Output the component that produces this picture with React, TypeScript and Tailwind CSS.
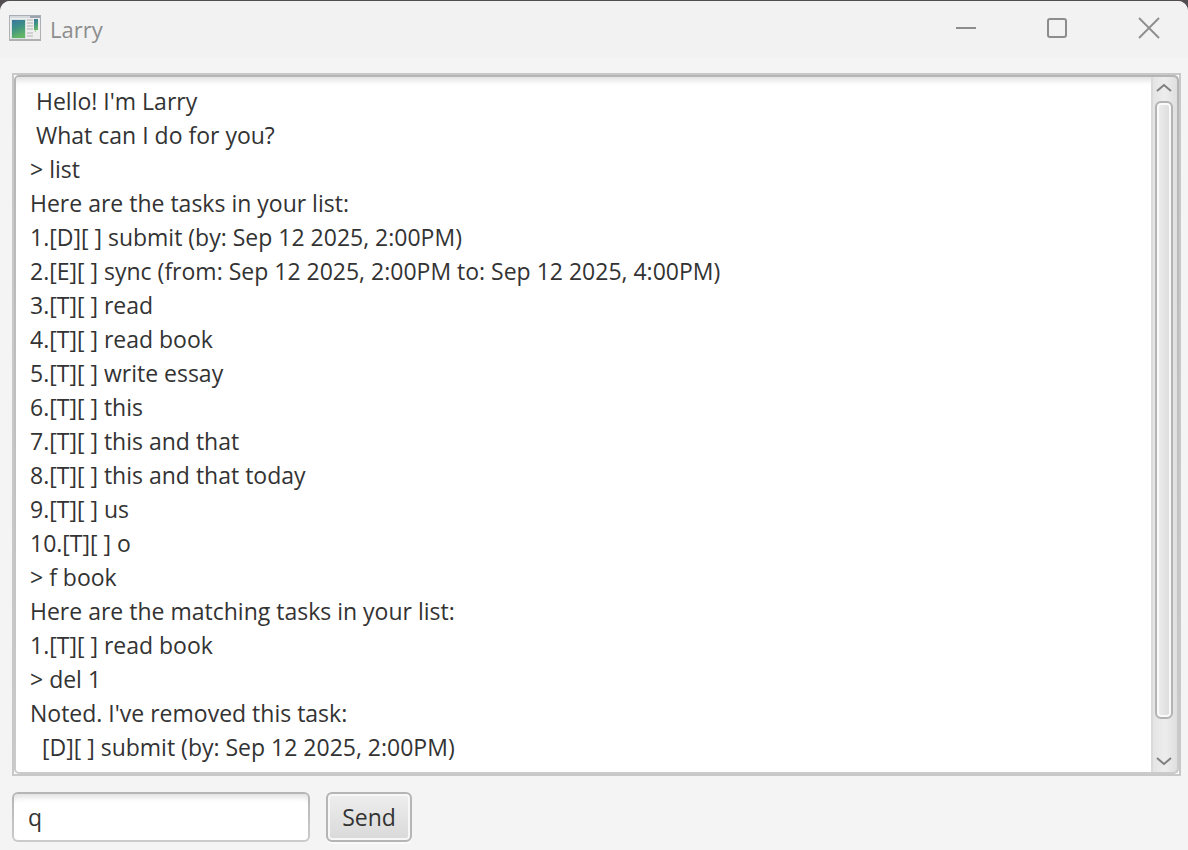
import { useState } from "react";

const lines: string[] = [
  " Hello! I'm Larry",
  " What can I do for you?",
  "> list",
  "Here are the tasks in your list:",
  "1.[D][ ] submit (by: Sep 12 2025, 2:00PM)",
  "2.[E][ ] sync (from: Sep 12 2025, 2:00PM to: Sep 12 2025, 4:00PM)",
  "3.[T][ ] read",
  "4.[T][ ] read book",
  "5.[T][ ] write essay",
  "6.[T][ ] this",
  "7.[T][ ] this and that",
  "8.[T][ ] this and that today",
  "9.[T][ ] us",
  "10.[T][ ] o",
  "> f book",
  "Here are the matching tasks in your list:",
  "1.[T][ ] read book",
  "> del 1",
  "Noted. I've removed this task:",
  "  [D][ ] submit (by: Sep 12 2025, 2:00PM)",
];

function AppIcon() {
  return (
    <svg width="32" height="26" viewBox="0 0 32 26" aria-hidden="true">
      <defs>
        <linearGradient id="pane" x1="0" y1="0" x2="0.3" y2="1">
          <stop offset="0" stopColor="#3a75a0" />
          <stop offset="0.5" stopColor="#3f9185" />
          <stop offset="1" stopColor="#62b565" />
        </linearGradient>
        <linearGradient id="frame" x1="0" y1="0" x2="0" y2="1">
          <stop offset="0" stopColor="#a9afb5" />
          <stop offset="1" stopColor="#b0b0b0" />
        </linearGradient>
      </defs>
      <rect width="32" height="26" fill="url(#frame)" />
      <rect x="1" y="2" width="30" height="22" fill="#eeeeee" />
      <rect x="1" y="1" width="20" height="2" fill="#d5d9dd" />
      <rect x="21" y="1" width="10" height="2" fill="#9ba4ae" />
      <rect x="2" y="4" width="15" height="20" fill="#d5e4e0" />
      <rect x="3" y="5" width="13" height="18" fill="url(#pane)" />
      <path d="M18 5h6M18 8h6M18 11h6M18 14h6M18 18h6M18 21h6" stroke="#c6c6c6" strokeWidth="1.4" />
      <rect x="25" y="4" width="4" height="11" fill="url(#pane)" />
      <path d="M26.5 15v2" stroke="#a5d09b" />
    </svg>
  );
}

function TitleBar() {
  return (
    <header className="flex h-14 shrink-0 items-start justify-between bg-[#f2f2f2] text-[#8d8d8d]">
      <div className="flex items-center gap-[9px] pt-[10px] pl-[9px]">
        <AppIcon />
        <h1 className="pt-[2px] text-[22px] leading-8">Larry</h1>
      </div>
      <div className="flex h-[54px]">
        <button type="button" aria-label="Minimize" className="flex w-[91px] items-center justify-center">
          <svg width="22" height="22" viewBox="0 0 22 22" stroke="currentColor" strokeWidth="2">
            <path d="M1 11h20" />
          </svg>
        </button>
        <button type="button" aria-label="Maximize" className="flex w-[91px] items-center justify-center">
          <svg width="22" height="22" viewBox="0 0 22 22" fill="none" stroke="currentColor" strokeWidth="2">
            <rect x="2" y="2" width="18" height="18" rx="2" />
          </svg>
        </button>
        <button type="button" aria-label="Close" className="mr-[-8px] flex w-[94px] items-center justify-center">
          <svg width="22" height="22" viewBox="0 0 22 22" stroke="currentColor" strokeWidth="1.8">
            <path d="M1 1l20 20M21 1L1 21" />
          </svg>
        </button>
      </div>
    </header>
  );
}

function ScrollBar() {
  return (
    <div className="flex w-[26px] shrink-0 flex-col items-center rounded-r-[4px] border-l-2 border-[#dadada] bg-linear-to-r from-[#e4e4e4] via-[#ededed] to-[#dfdfdf] pr-[3px]">
      <button type="button" aria-label="Scroll up" className="flex h-6 w-full shrink-0 items-start justify-center pt-[6px]">
        <svg width="16" height="10" viewBox="0 0 16 10" fill="none" stroke="#808080" strokeWidth="2">
          <path d="M1 8l7-6 7 6" />
        </svg>
      </button>
      <div className="flex min-h-0 w-full flex-1 justify-center">
        <div className="h-[95.5%] w-[18px] rounded-[6px] border-2 border-[#b3b3b3] bg-linear-to-r from-[#eeeeee] to-[#dcdcdc] shadow-[inset_0_0_0_2px_#fafafa]" />
      </div>
      <button type="button" aria-label="Scroll down" className="flex h-6 w-full shrink-0 items-end justify-center pb-[6px]">
        <svg width="16" height="10" viewBox="0 0 16 10" fill="none" stroke="#808080" strokeWidth="2">
          <path d="M1 2l7 6 7-6" />
        </svg>
      </button>
    </div>
  );
}

export default function App() {
  const [command, setCommand] = useState("q");

  return (
    <div className="h-screen bg-[#514d50] pt-[1px] font-['Open_Sans','Noto_Sans',sans-serif]">
      <div className="flex h-full flex-col overflow-hidden rounded-t-[10px] bg-[#f4f4f4]">
        <TitleBar />
        <main className="flex min-h-0 flex-1 flex-col gap-4 pt-4 pr-[7px] pb-2 pl-3">
          <section className="flex min-h-0 flex-1 border-2 border-[#c8c8c8] bg-white">
            <div className="flex min-w-0 flex-1 rounded-[5px] bg-linear-to-b from-[#b5b5b5] to-[#cbcbcb] p-[2px]">
              <div
                role="log"
                className="min-w-0 flex-1 overflow-hidden rounded-l-[3px] bg-white pt-[7px] pl-[14px] text-[23px] leading-[34px] whitespace-pre-wrap text-[#333333] shadow-[inset_0_9px_6px_-6px_#dedede]"
              >
                {lines.map((line, index) => (
                  <p key={index}>{line}</p>
                ))}
              </div>
              <ScrollBar />
            </div>
          </section>
          <form className="flex h-[50px] shrink-0 gap-4" onSubmit={(event) => event.preventDefault()}>
            <div className="flex w-[298px] rounded-[6px] bg-linear-to-b from-[#b5b5b5] to-[#cbcbcb] p-[2px]">
              <input
                type="text"
                aria-label="Command"
                value={command}
                onChange={(event) => setCommand(event.target.value)}
                className="w-full rounded-[4px] bg-white px-[14px] text-[23px] text-[#333333] shadow-[inset_0_9px_6px_-6px_#dedede] outline-none"
              />
            </div>
            <button
              type="submit"
              className="w-[86px] rounded-[6px] border-2 border-[#b5b5b5] bg-linear-to-b from-[#eeeeee] to-[#d9d9d9] text-[23px] text-[#333333] shadow-[inset_0_0_0_2px_#f7f7f7,0_2px_0_#fafafa]"
            >
              Send
            </button>
          </form>
        </main>
      </div>
    </div>
  );
}
